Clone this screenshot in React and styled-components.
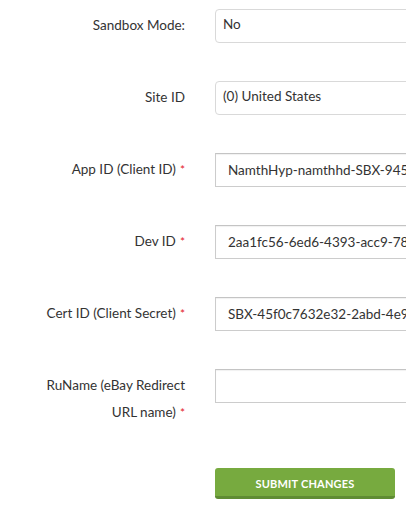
import React from "react";
import styled, { createGlobalStyle } from "styled-components";

const GlobalStyle = createGlobalStyle`
  html, body {
    margin: 0;
    padding: 0;
    background: #fff;
    overflow: hidden;
  }
  body {
    font-family: Lato, "Open Sans", Arial, sans-serif;
    color: #333;
  }
`;

const Form = styled.form`
  display: flex;
  flex-direction: column;
  gap: 38px;
  padding-top: 9px;
  width: 560px;
`;

const Row = styled.div`
  display: grid;
  grid-template-columns: 185px 330px;
  column-gap: 30px;
  align-items: start;
`;

const Label = styled.label`
  justify-self: end;
  max-width: 152px;
  text-align: right;
  font-size: 13.5px;
  line-height: 27px;
  padding-top: 3px;
  color: #333;
`;

const Star = styled.span`
  display: inline-block;
  color: #e4202a;
  font-size: 12px;
  line-height: 12px;
  margin-left: 4px;
`;

const Select = styled.div`
  box-sizing: border-box;
  height: 34px;
  border: 1px solid #d9d9d9;
  border-radius: 4px;
  padding: 4px 7px 0;
  font-size: 13.5px;
  line-height: 20px;
  color: #333;
  white-space: nowrap;
  overflow: hidden;
`;

const Input = styled.input`
  box-sizing: border-box;
  height: 34px;
  width: 100%;
  border: 1px solid #cccccc;
  border-top-color: #c4c4c4;
  box-shadow: inset 0 1px 1px rgba(0, 0, 0, 0.06);
  border-radius: 0;
  padding: 0 12px;
  font-family: Lato, "Open Sans", Arial, sans-serif;
  font-size: 13.5px;
  color: #333;
  outline: none;
`;

const Actions = styled.div`
  padding-left: 215px;
  margin-top: 4px;
`;

const Button = styled.button`
  width: 180px;
  height: 31px;
  border: none;
  border-bottom: 3px solid #5f8c33;
  border-radius: 3px;
  background: #77aa3f;
  color: #fff;
  font-family: Lato, "Open Sans", Arial, sans-serif;
  font-weight: 700;
  font-size: 11px;
  letter-spacing: 0.2px;
  text-transform: uppercase;
  padding: 3px 0 0;
  cursor: pointer;
`;

const fields = [
  { label: "App ID (Client ID)", value: "NamthHyp-namthhd-SBX-9456f3e2a-1c2d3e4f" },
  { label: "Dev ID", value: "2aa1fc56-6ed6-4393-acc9-78d1b2c3e4f5" },
  { label: "Cert ID (Client Secret)", value: "SBX-45f0c7632e32-2abd-4e9a-b1c2" },
  { label: "RuName (eBay Redirect URL name)", value: "" },
];

export default function App() {
  return (
    <>
      <GlobalStyle />
      <Form onSubmit={(e) => e.preventDefault()}>
        <Row>
          <Label>Sandbox Mode:</Label>
          <Select>No</Select>
        </Row>
        <Row>
          <Label>Site ID</Label>
          <Select>(0) United States</Select>
        </Row>
        {fields.map((f) => (
          <Row key={f.label}>
            <Label>
              {f.label}
              <Star>*</Star>
            </Label>
            <Input defaultValue={f.value} />
          </Row>
        ))}
        <Actions>
          <Button type="submit">Submit Changes</Button>
        </Actions>
      </Form>
    </>
  );
}
